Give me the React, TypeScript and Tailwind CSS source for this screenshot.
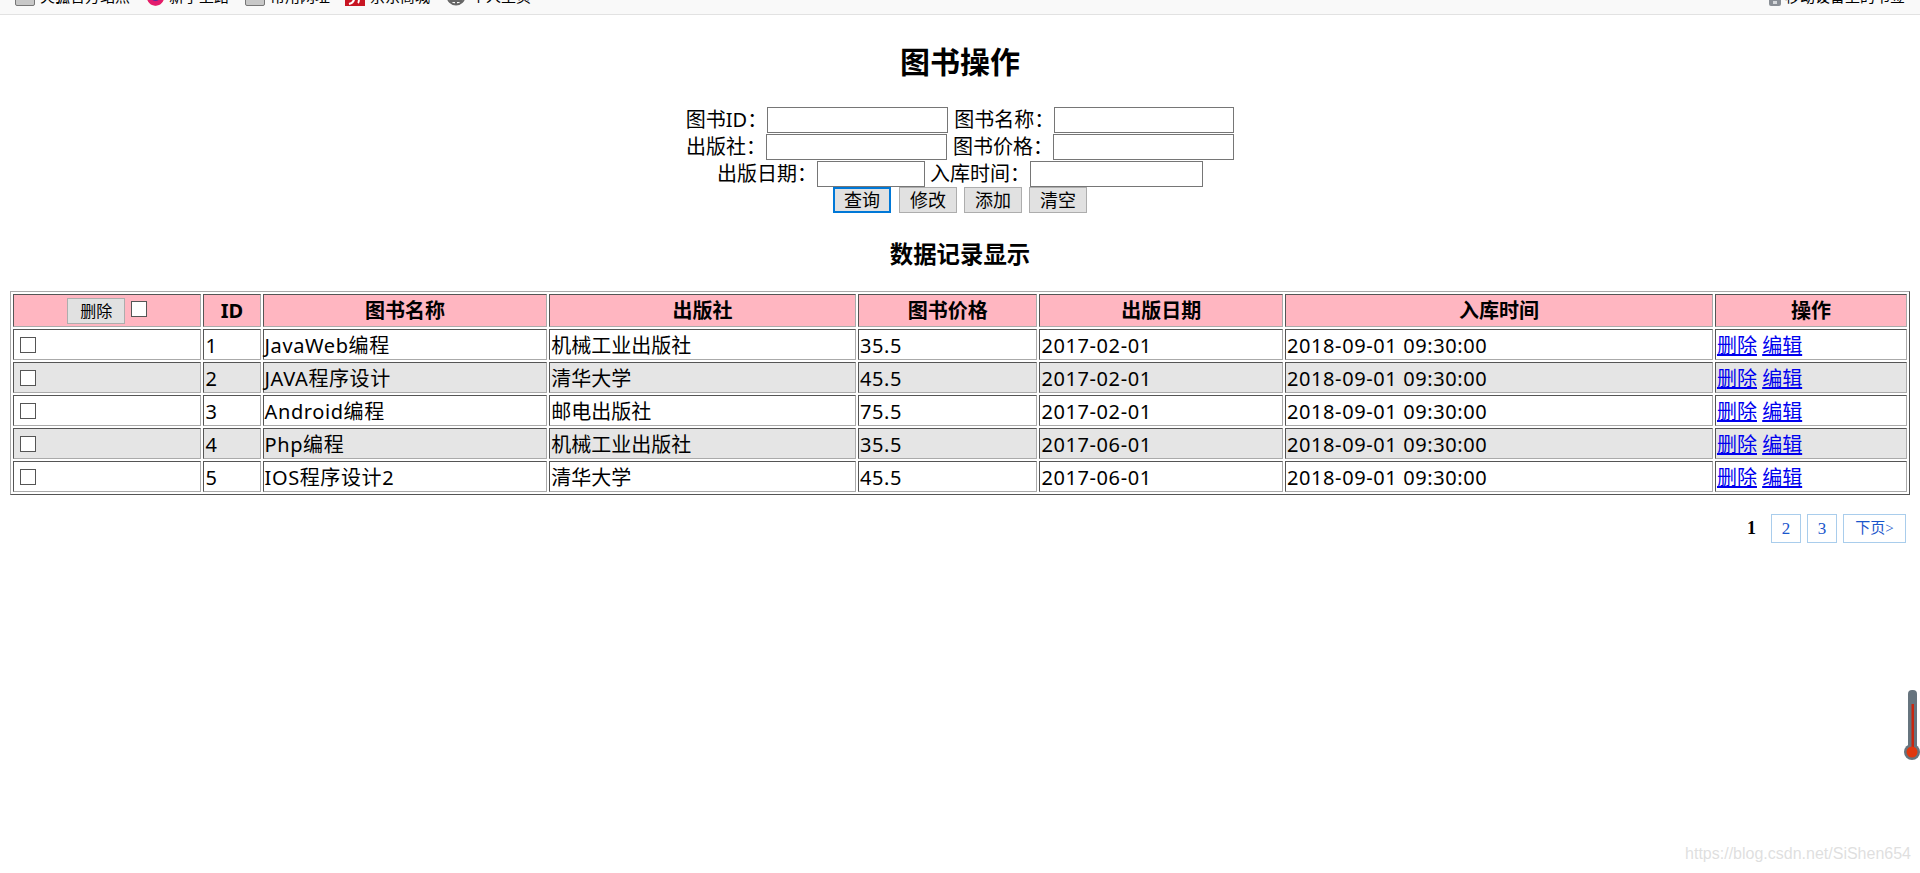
const FONT = "font-['Noto_Sans','Noto_Sans_CJK_SC',sans-serif]";

const books = [
  { id: 1, name: "JavaWeb编程", press: "机械工业出版社", price: "35.5", date: "2017-02-01" },
  { id: 2, name: "JAVA程序设计", press: "清华大学", price: "45.5", date: "2017-02-01" },
  { id: 3, name: "Android编程", press: "邮电出版社", price: "75.5", date: "2017-02-01" },
  { id: 4, name: "Php编程", press: "机械工业出版社", price: "35.5", date: "2017-06-01" },
  { id: 5, name: "IOS程序设计2", press: "清华大学", price: "45.5", date: "2017-06-01" },
];

const headers = ["ID", "图书名称", "出版社", "图书价格", "出版日期", "入库时间", "操作"];

const thClass =
  "h-[33px] border border-t-[#555] border-l-[#555] border-b-[#aaa] border-r-[#aaa] bg-[#ffb6c1] p-0 text-center text-[20px] font-bold leading-[31px]";
const tdClass =
  "h-[31px] border border-t-[#555] border-l-[#555] border-b-[#aaa] border-r-[#aaa] px-[1px] pt-[1px] pb-0 text-[20px] leading-[27px]";

function Bookmark({ icon, label, className }: { icon: React.ReactNode; label: string; className: string }) {
  return (
    <div className={`flex items-center gap-[5px] ${className}`}>
      {icon}
      <span className="text-[15px] leading-[20px] text-black whitespace-nowrap">{label}</span>
    </div>
  );
}

const grayIcon = <div className="h-[20px] w-[20px] rounded-[2px] border border-[#777] bg-[#c8c8c8]" />;

function FoxIcon() {
  return (
    <svg width="17" height="20" viewBox="0 0 17 20">
      <circle cx="8.5" cy="11" r="8.5" fill="#f0572a" />
      <path d="M0.5 14a8.5 8.5 0 0 0 16 0z" fill="#e31b6d" />
      <circle cx="8.5" cy="10" r="5" fill="#5b2a9e" />
    </svg>
  );
}

function JdIcon() {
  return (
    <svg width="20" height="20" viewBox="0 0 20 20">
      <rect width="20" height="20" fill="#c81623" />
      <path d="M9 9c1 5-1 8-5 9M13 8c1 4 1 8 0 9" fill="none" stroke="#fff" strokeWidth="2" />
    </svg>
  );
}

function GlobeIcon() {
  return (
    <svg width="20" height="20" viewBox="0 0 20 20" fill="none" stroke="#666" strokeWidth="2">
      <circle cx="10" cy="10" r="8.5" />
      <path d="M10 1.5v17M1.5 10h17M4 15h12" />
    </svg>
  );
}

function PhoneIcon() {
  return (
    <svg width="12" height="20" viewBox="0 0 12 20">
      <rect width="12" height="20" rx="2" fill="#8a8f96" />
      <rect x="1.5" y="2" width="9" height="11" fill="#d5d8db" />
      <rect x="4" y="15" width="4" height="3" fill="#d5d8db" />
    </svg>
  );
}

function BookmarkBar() {
  return (
    <div className="relative h-[15px] overflow-hidden border-b border-[#e2e2e2] bg-[#f9f9f9]">
      <div className="absolute left-0 right-0 top-[-14px] flex h-[20px] pl-[15px]">
        <Bookmark icon={grayIcon} label="火狐官方站点" className="w-[132px]" />
        <Bookmark icon={<FoxIcon />} label="新手上路" className="w-[98px]" />
        <Bookmark icon={grayIcon} label="常用网址" className="w-[100px]" />
        <Bookmark icon={<JdIcon />} label="京东商城" className="w-[101px]" />
        <Bookmark icon={<GlobeIcon />} label="个人主页" className="w-[100px]" />
        <div className="ml-auto mr-[15px] flex items-center gap-[4px]">
          <PhoneIcon />
          <span className="text-[15px] leading-[20px] text-black whitespace-nowrap">移动设备上的书签</span>
        </div>
      </div>
    </div>
  );
}

function Field({ label, width }: { label: string; width: string }) {
  return (
    <label className="flex items-center">
      <span className="whitespace-nowrap">{label}</span>
      <input className={`h-[26px] border border-[#767676] bg-white ${width}`} />
    </label>
  );
}

function ActionButton({ text, focused }: { text: string; focused?: boolean }) {
  return (
    <button
      className={
        focused
          ? "mr-[1px] h-[26px] w-[58px] border-2 border-[#0078d7] bg-[#e1e1e1] text-[18px] leading-none"
          : "h-[26px] w-[58px] border border-[#adadad] bg-[#e1e1e1] text-[18px] leading-none"
      }
    >
      {text}
    </button>
  );
}

function Thermometer() {
  return (
    <svg className="absolute right-0 top-[690px]" width="16" height="72" viewBox="0 0 16 72">
      <rect x="4" y="0" width="9" height="62" rx="4" fill="#66747e" />
      <circle cx="8" cy="62" r="8" fill="#66747e" />
      <rect x="7.5" y="14" width="2.5" height="46" fill="#c8260f" />
      <circle cx="8" cy="62" r="5.5" fill="#e0380f" />
    </svg>
  );
}

export default function App() {
  return (
    <div className={`relative h-[873px] overflow-hidden bg-white text-black ${FONT}`}>
      <BookmarkBar />

      <h2 className="mt-[32px] text-center text-[30px] font-bold leading-[30px]">图书操作</h2>

      <form className="mt-[29px] flex flex-col items-center text-[20px]">
        <div className="flex h-[27px] items-center gap-[6px]">
          <Field label="图书ID：" width="w-[181px]" />
          <Field label="图书名称：" width="w-[180px]" />
        </div>
        <div className="flex h-[27px] items-center gap-[6px]">
          <Field label="出版社：" width="w-[181px]" />
          <Field label="图书价格：" width="w-[181px]" />
        </div>
        <div className="flex h-[27px] items-center gap-[5px]">
          <Field label="出版日期：" width="w-[108px]" />
          <Field label="入库时间：" width="w-[173px]" />
        </div>
        <div className="-mt-[1px] flex h-[27px] items-center gap-[7px]">
          <ActionButton text="查询" focused />
          <ActionButton text="修改" />
          <ActionButton text="添加" />
          <ActionButton text="清空" />
        </div>
      </form>

      <h3 className="mt-[26px] text-center text-[23.4px] font-bold leading-[30px]">数据记录显示</h3>

      <div className="mx-[10px] mt-[22px]">
        <table className="w-[1900px] table-fixed border-separate border-spacing-x-[2.5px] border-spacing-y-[2px] border border-t-[#aaa] border-l-[#aaa] border-b-[#555] border-r-[#555]">
          <colgroup>
            <col className="w-[188px]" />
            <col className="w-[57px]" />
            <col className="w-[284px]" />
            <col className="w-[306px]" />
            <col className="w-[179px]" />
            <col className="w-[243px]" />
            <col className="w-[427px]" />
            <col className="w-[191.5px]" />
          </colgroup>
          <thead>
            <tr>
              <th className={thClass}>
                <div className="flex h-[31px] items-center justify-center gap-[6px]">
                  <button className="h-[26px] w-[58px] border border-[#adadad] bg-[#e1e1e1] text-[16px] font-normal leading-none">
                    删除
                  </button>
                  <input type="checkbox" className="mb-[3px] h-[16px] w-[16px] appearance-none border border-[#555] bg-white" />
                </div>
              </th>
              {headers.map((h) => (
                <th key={h} className={thClass}>
                  {h}
                </th>
              ))}
            </tr>
          </thead>
          <tbody>
            {books.map((b, i) => (
              <tr key={b.id} className={i % 2 === 1 ? "bg-[#e5e5e5]" : "bg-white"}>
                <td className={tdClass}>
                  <input
                    type="checkbox"
                    className="ml-[5px] block h-[16px] w-[16px] appearance-none border border-[#555] bg-white"
                  />
                </td>
                <td className={`${tdClass} tracking-[0.6px]`}>{b.id}</td>
                <td className={`${tdClass} tracking-[0.6px]`}>{b.name}</td>
                <td className={tdClass}>{b.press}</td>
                <td className={`${tdClass} tracking-[0.6px]`}>{b.price}</td>
                <td className={`${tdClass} tracking-[0.6px]`}>{b.date}</td>
                <td className={`${tdClass} tracking-[0.6px]`}>2018-09-01 09:30:00</td>
                <td className={`${tdClass} whitespace-nowrap`}>
                  <a href="#" className="text-[#0000ee] underline">删除</a>{" "}
                  <a href="#" className="text-[#0000ee] underline">编辑</a>
                </td>
              </tr>
            ))}
          </tbody>
        </table>
      </div>

      <div className="mr-[14px] mt-[19px] flex items-center justify-end gap-[6px] font-['Liberation_Serif','Noto_Sans_CJK_SC',serif] text-[15px]">
        <span className="mr-[9px] text-[18px] font-bold text-black">1</span>
        <a href="#" className="flex h-[29px] w-[30px] items-center justify-center border border-[#a9cdec] text-[17px] text-[#1a56cc]">2</a>
        <a href="#" className="flex h-[29px] w-[30px] items-center justify-center border border-[#a9cdec] text-[17px] text-[#1a56cc]">3</a>
        <a href="#" className="flex h-[29px] w-[63px] items-center justify-center border border-[#a9cdec] text-[#1a56cc]">下页&gt;</a>
      </div>

      <Thermometer />

      <div className="absolute bottom-[9px] right-[9px] font-['Liberation_Sans',sans-serif] text-[16px] leading-[20px] text-[#dfdfdf]">
        https://blog.csdn.net/SiShen654
      </div>
    </div>
  );
}
